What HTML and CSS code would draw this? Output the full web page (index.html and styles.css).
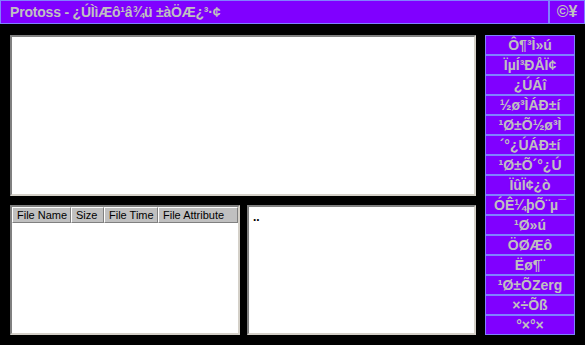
FILE: index.html
```html
<!DOCTYPE html>
<html lang="zh-CN">
<head>
    <meta charset="UTF-8">
    <title>Protoss</title>
    <link rel="stylesheet" href="styles.css">
</head>
<body>
<div class="titlebar">
    <div class="title">Protoss - ¿ÚÌìÆô¹â¾ü ±àÖÆ¿³·¢</div>
    <div class="sysbox">©¥</div>
</div>
<div class="main">
    <div class="left-col">
        <div class="panel top-panel"></div>
        <div class="bottom-row">
            <div class="panel file-panel">
                <div class="file-header">
                    <div class="col col-name">File Name</div>
                    <div class="col col-size">Size</div>
                    <div class="col col-time">File Time</div>
                    <div class="col col-attr">File Attribute</div>
                </div>
            </div>
            <div class="panel dir-panel">
                <div class="dir-item">..</div>
            </div>
        </div>
    </div>
    <div class="menu">
        <div class="menu-btn">Ô¶³Ì»ú</div>
        <div class="menu-btn">ÏµÍ³ÐÅÏ¢</div>
        <div class="menu-btn">¿ÚÁî</div>
        <div class="menu-btn">½ø³ÌÁÐ±í</div>
        <div class="menu-btn">¹Ø±Õ½ø³Ì</div>
        <div class="menu-btn">´°¿ÚÁÐ±í</div>
        <div class="menu-btn">¹Ø±Õ´°¿Ú</div>
        <div class="menu-btn">ÏûÏ¢¿ò</div>
        <div class="menu-btn">ÓÊ¼þÕ¨µ¯</div>
        <div class="menu-btn">¹Ø»ú</div>
        <div class="menu-btn">ÖØÆô</div>
        <div class="menu-btn">Ëø¶¨</div>
        <div class="menu-btn">¹Ø±ÕZerg</div>
        <div class="menu-btn">×÷Õß</div>
        <div class="menu-btn">°×°×</div>
    </div>
</div>
</body>
</html>
```

FILE: styles.css
```css
body, html {
    margin: 0;
    padding: 0;
    background-color: #000000;
    font-family: 'Liberation Sans', Arial, sans-serif;
}
.titlebar {
    display: flex;
    height: 24px;
    box-sizing: border-box;
    border: 1px solid #8080ff;
    background-color: #8000ff;
    color: #c0c0c0;
    font-weight: bold;
    font-size: 14px;
    line-height: 22px;
}
.title {
    flex: 1;
    padding-left: 9px;
    letter-spacing: -0.2px;
}
.sysbox {
    width: 34px;
    border-left: 2px solid #8080ff;
    text-align: center;
    font-size: 16px;
}
.main {
    display: flex;
    gap: 9px;
    padding: 11px 10px 0 10px;
}
.left-col {
    width: 466px;
    display: flex;
    flex-direction: column;
    gap: 9px;
}
.panel {
    background-color: #ffffff;
    box-sizing: border-box;
    border-top: 2px solid #808080;
    border-left: 2px solid #808080;
    border-bottom: 2px solid #d4d0c8;
    border-right: 2px solid #d4d0c8;
}
.top-panel {
    height: 161px;
}
.bottom-row {
    display: flex;
    gap: 7px;
    height: 130px;
}
.file-panel {
    width: 230px;
}
.dir-panel {
    flex: 1;
    padding: 2px 4px;
}
.file-header {
    display: flex;
    height: 16px;
}
.col {
    box-sizing: border-box;
    background-color: #c0c0c0;
    border-top: 1px solid #ffffff;
    border-left: 1px solid #ffffff;
    border-bottom: 1px solid #808080;
    border-right: 1px solid #808080;
    font-size: 11px;
    line-height: 14px;
    padding-left: 4px;
    color: #000000;
    white-space: nowrap;
}
.col-name {
    width: 59px;
}
.col-size {
    width: 33px;
}
.col-time {
    width: 54px;
}
.col-attr {
    width: 80px;
}
.dir-item {
    font-size: 12px;
    font-weight: bold;
    line-height: 16px;
}
.menu {
    width: 90px;
    display: flex;
    flex-direction: column;
}
.menu-btn {
    height: 20px;
    box-sizing: border-box;
    border: 1px solid #8080ff;
    background-color: #8000ff;
    color: #c0c0c0;
    font-weight: bold;
    font-size: 14px;
    line-height: 18px;
    text-align: center;
    white-space: nowrap;
}
```
